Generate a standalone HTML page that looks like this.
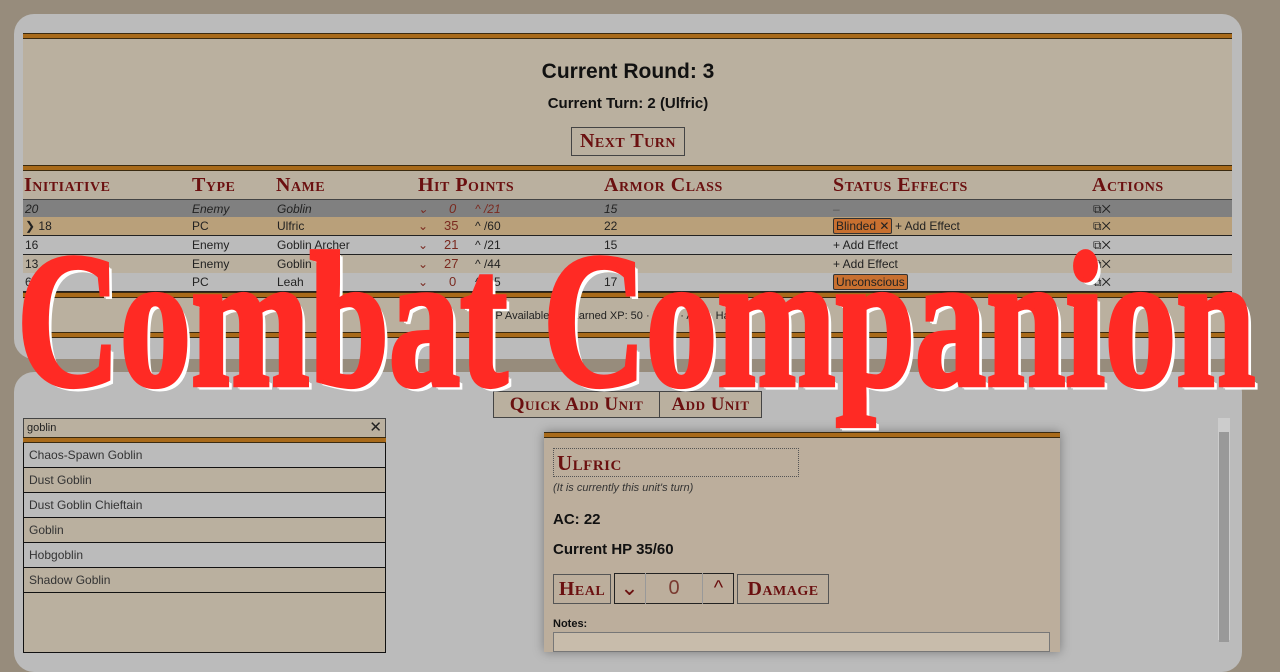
<!DOCTYPE html>
<html><head><meta charset="utf-8"><style>
*{box-sizing:border-box;margin:0;padding:0}
body{width:1280px;height:640px;overflow:hidden;background:#978c7c;font-family:"Liberation Sans",sans-serif;position:relative;font-size:12px;color:#222}
.abs{position:absolute}
.panel{background:#bbbbbb;border-radius:20px}
.bar{position:absolute;height:6px;background:#a86a1a;border-top:1px solid #3a2a10;border-bottom:1px solid #3a2a10}
.sc{font-family:"Liberation Serif",serif;font-variant:small-caps;color:#6b1010;font-weight:bold;letter-spacing:.5px}
.row{position:absolute;left:23px;width:1209px;height:19px;border-bottom:1px solid #222;font-size:12px;line-height:18px}
.row span{position:absolute;top:0}
.hp{color:#7a2a20;font-size:13px}
.list div{height:25px;border:1px solid #111;border-top:none;padding-left:5px;line-height:24px;font-size:12px;color:#333}
</style></head><body>
<div class="abs panel" style="left:14px;top:14px;width:1228px;height:345px"></div>
<div class="abs" style="left:23px;top:33px;width:1209px;height:305px;background:#bab09f"></div>
<div class="bar" style="left:23px;top:33px;width:1209px"></div>
<div class="abs" style="left:0;top:60px;width:1256px;text-align:center;font-weight:bold;font-size:21px;color:#111">Current Round: 3</div>
<div class="abs" style="left:0;top:95px;width:1256px;text-align:center;font-weight:bold;font-size:15px;color:#111">Current Turn: 2 (Ulfric)</div>
<div class="abs sc" style="left:571px;top:127px;width:114px;height:29px;border:1px solid #444;text-align:center;font-size:20px;line-height:26px">Next Turn</div>
<div class="bar" style="left:23px;top:165px;width:1209px"></div>
<div class="abs sc" style="left:24px;top:174px;font-size:20px">Initiative</div>
<div class="abs sc" style="left:192px;top:174px;font-size:20px">Type</div>
<div class="abs sc" style="left:276px;top:174px;font-size:20px">Name</div>
<div class="abs sc" style="left:418px;top:174px;font-size:20px">Hit Points</div>
<div class="abs sc" style="left:604px;top:174px;font-size:20px">Armor Class</div>
<div class="abs sc" style="left:833px;top:174px;font-size:20px">Status Effects</div>
<div class="abs sc" style="left:1092px;top:174px;font-size:20px">Actions</div>

<div class="row" style="top:199px;background:#808080;font-style:italic;border-top:1px solid #444"><span style="left:2px">20</span><span style="left:169px">Enemy</span><span style="left:254px">Goblin</span><span style="left:395px;color:#7a2a20">&#8964;</span><span class="hp" style="left:426px">0</span><span style="left:452px;color:#7a2a20">^ /21</span><span style="left:581px">15</span><span style="left:810px;color:#555">–</span><span style="left:1070px;font-style:normal">⧉✕</span></div>
<div class="row" style="top:217px;background:#b9a07a"><span style="left:2px">❯ 18</span><span style="left:169px">PC</span><span style="left:254px">Ulfric</span><span style="left:395px;color:#7a2a20">&#8964;</span><span class="hp" style="left:421px">35</span><span style="left:452px">^ /60</span><span style="left:581px">22</span><span style="left:810px;top:1px;background:#c87030;border:1px solid #333;border-radius:2px;padding:0 2px;line-height:14px;height:16px">Blinded ✕</span><span style="left:872px">+ Add Effect</span><span style="left:1070px">⧉✕</span></div>
<div class="row" style="top:236px;background:#bbbbbb"><span style="left:2px">16</span><span style="left:169px">Enemy</span><span style="left:254px">Goblin Archer</span><span style="left:395px;color:#7a2a20">&#8964;</span><span class="hp" style="left:421px">21</span><span style="left:452px">^ /21</span><span style="left:581px">15</span><span style="left:810px">+ Add Effect</span><span style="left:1070px">⧉✕</span></div>
<div class="row" style="top:255px;background:#bab09f"><span style="left:2px">13</span><span style="left:169px">Enemy</span><span style="left:254px">Goblin</span><span style="left:395px;color:#7a2a20">&#8964;</span><span class="hp" style="left:421px">27</span><span style="left:452px">^ /44</span><span style="left:810px">+ Add Effect</span><span style="left:1070px">⧉✕</span></div>
<div class="row" style="top:273px;background:#bbbbbb"><span style="left:2px">6</span><span style="left:169px">PC</span><span style="left:254px">Leah</span><span style="left:395px;color:#7a2a20">&#8964;</span><span class="hp" style="left:426px">0</span><span style="left:452px">^ /45</span><span style="left:581px">17</span><span style="left:810px;top:1px;background:#c87030;border:1px solid #333;border-radius:2px;padding:0 2px;line-height:14px;height:16px">Unconscious</span><span style="left:1070px">⧉✕</span></div>
<div class="bar" style="left:23px;top:292px;width:1209px"></div>
<div class="abs" style="left:488px;top:310px;font-size:11px">XP Available: 0 · Earned XP: 50 · Easy · Add · Hard</div>
<div class="bar" style="left:23px;top:332px;width:1209px"></div>

<div class="abs panel" style="left:14px;top:372px;width:1228px;height:300px"></div>
<div class="abs sc" style="left:493px;top:391px;width:167px;height:27px;border:1px solid #444;background:#bab09f;font-size:19px;line-height:25px;text-align:center">Quick Add Unit</div>
<div class="abs sc" style="left:659px;top:391px;width:103px;height:27px;border:1px solid #444;background:#bab09f;font-size:19px;line-height:25px;text-align:center">Add Unit</div>
<div class="abs" style="left:23px;top:418px;width:363px;height:20px;background:#bab09f;border:1px solid #444;font-size:11px;padding-left:3px;line-height:18px">goblin<span style="position:absolute;right:3px;font-size:15px;top:0">✕</span></div>
<div class="bar" style="left:23px;top:437px;width:363px"></div>
<div class="abs list" style="left:23px;top:443px;width:363px">
<div style="background:#bbb">Chaos-Spawn Goblin</div>
<div style="background:#bab09f">Dust Goblin</div>
<div style="background:#bbb">Dust Goblin Chieftain</div>
<div style="background:#bab09f">Goblin</div>
<div style="background:#bbb">Hobgoblin</div>
<div style="background:#bab09f">Shadow Goblin</div>
<div style="background:#bab09f;height:60px"></div>
</div>
<div class="abs" style="left:1218px;top:418px;width:12px;height:222px;background:#ccc"><div style="margin:14px 1px 0;height:210px;background:#999"></div></div>

<div class="abs" style="left:544px;top:432px;width:516px;height:220px;background:#bcae9c;box-shadow:0 0 10px rgba(0,0,0,.35)"></div>
<div class="bar" style="left:544px;top:432px;width:516px"></div>
<div class="abs sc" style="left:553px;top:448px;width:246px;height:29px;border:1px dotted #555;font-size:21px;line-height:28px;padding-left:3px">Ulfric</div>
<div class="abs" style="left:553px;top:482px;font-style:italic;font-size:11px;color:#333">(It is currently this unit's turn)</div>
<div class="abs" style="left:553px;top:511px;font-weight:bold;font-size:15px;color:#111">AC: 22</div>
<div class="abs" style="left:553px;top:541px;font-weight:bold;font-size:15px;color:#111">Current HP 35/60</div>
<div class="abs sc" style="left:553px;top:574px;width:58px;height:30px;border:1px solid #555;font-size:20px;line-height:28px;text-align:center">Heal</div>
<div class="abs" style="left:614px;top:573px;width:120px;height:31px;border:1px solid #222"></div>
<div class="abs" style="left:614px;top:573px;width:32px;height:31px;border-right:1px solid #999;color:#6b1010;font-size:22px;text-align:center;line-height:30px">&#8964;</div>
<div class="abs" style="left:646px;top:573px;width:56px;height:31px;color:#7a3a30;font-size:20px;text-align:center;line-height:31px">0</div>
<div class="abs" style="left:702px;top:573px;width:32px;height:31px;border-left:1px solid #999;color:#6b1010;font-size:20px;text-align:center;line-height:31px">^</div>
<div class="abs sc" style="left:737px;top:574px;width:92px;height:30px;border:1px solid #555;font-size:20px;line-height:28px;text-align:center">Damage</div>
<div class="abs" style="left:553px;top:618px;font-weight:bold;font-size:11px;color:#111">Notes:</div>
<div class="abs" style="left:553px;top:632px;width:497px;height:20px;border:1px solid #777;background:#c8bcab"></div>

<div class="abs" style="left:17px;top:224px;width:1240px;height:220px;overflow:visible">
<div style="position:absolute;left:0;top:0;white-space:nowrap;font-family:'Liberation Serif',serif;font-weight:bold;font-size:160px;line-height:160px;color:#ff2a24;-webkit-text-stroke:4px #ff2a24;transform:scale(0.89,1.2);transform-origin:0 0;text-shadow:5px 4px 0 #fff,3px 3px 0 #fff">Combat Companion</div>
</div>
</body></html>
